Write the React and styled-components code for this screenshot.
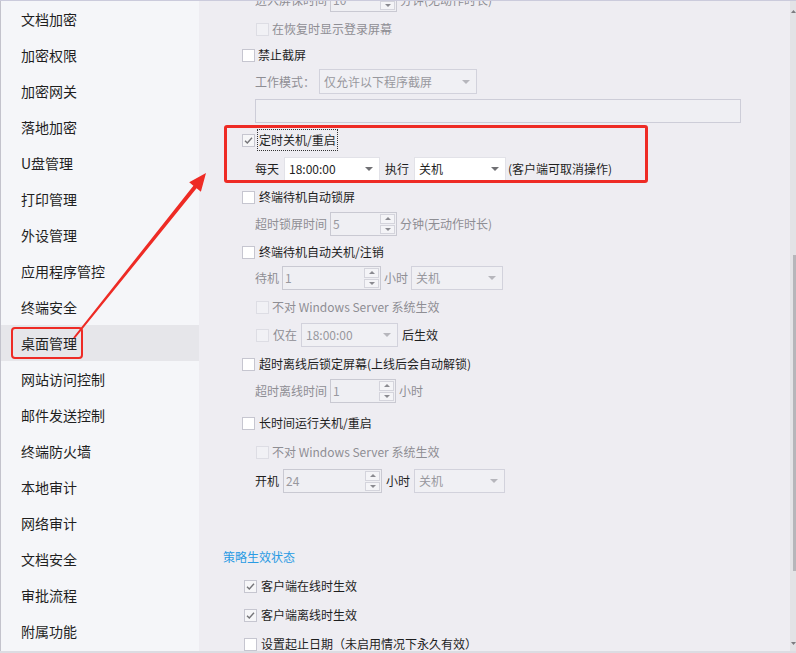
import React from "react";
import styled, { createGlobalStyle } from "styled-components";

const FONT = `"Noto Sans CJK SC", "Noto Sans", sans-serif`;

const Global = createGlobalStyle`
  html, body { margin: 0; padding: 0; background: #eeedf2; }
  body { font-family: ${FONT}; }
`;

const Frame = styled.div`
  position: relative;
  width: 796px;
  height: 653px;
  box-sizing: border-box;
  display: flex;
  overflow: hidden;
  border-top: 1px solid #cbcbdc;
  border-bottom: 2px solid #dcdce2;
  background: #eeedf2;
  font-family: ${FONT};
`;

const Sidebar = styled.nav`
  width: 199px;
  flex: none;
  box-sizing: border-box;
  border-left: 1px solid #c3c3cc;
  background: #f5f6f9;
  padding-top: 0;
  display: flex;
  flex-direction: column;
`;

const NavItem = styled.div`
  height: 36px;
  flex: none;
  display: flex;
  align-items: center;
  padding-left: 20px;
  font-size: 14px;
  line-height: 16px;
  color: #1f1f1f;
  background: ${(p) => (p.$active ? "#e6e6ea" : "transparent")};
`;

const Marked = styled.span`
  position: relative;
  &::after {
    content: "";
    position: absolute;
    left: -10px;
    right: -6px;
    top: -8px;
    bottom: -8px;
    border: 2.5px solid #ee2b25;
    border-radius: 4px;
    pointer-events: none;
  }
`;

const Splitter = styled.div`
  width: 12px;
  flex: none;
  display: flex;
  align-items: center;
`;

const Grip = styled.div`
  margin-left: 4px;
  width: 5px;
  height: 17px;
  background-image: radial-gradient(circle, #b4b4bc 0.5px, transparent 0.6px);
  background-size: 2px 2px;
`;

const Content = styled.main`
  flex: 1;
  display: flex;
  min-width: 0;
`;

const ScrollArea = styled.div`
  flex: 1;
  overflow: hidden;
  padding-left: 12px;
`;

const Column = styled.div`
  margin-top: -13px;
  display: flex;
  flex-direction: column;
`;

const Row = styled.div`
  display: flex;
  align-items: center;
  height: ${(p) => p.$h || 24}px;
  flex: none;
  margin-top: ${(p) => p.$mt || 0}px;
  padding-left: ${(p) => p.$indent || 0}px;
  gap: ${(p) => (p.$gap != null ? p.$gap : 4)}px;
  font-size: 12px;
  line-height: 16px;
  white-space: nowrap;
`;

const Text = styled.span`
  color: ${(p) => (p.$muted ? "#8e8e94" : "#1e1e1e")};
  ${(p) =>
    p.$focus
      ? `outline: 1px dotted #333; outline-offset: 1px; padding: 1px 0;`
      : ""}
`;

const Heading = styled.div`
  margin-top: ${(p) => p.$mt}px;
  height: 24px;
  display: flex;
  align-items: center;
  font-size: 12px;
  color: #2a9be3;
`;

const Box = styled.span`
  width: 13px;
  height: 13px;
  flex: none;
  box-sizing: border-box;
  display: flex;
  align-items: center;
  justify-content: center;
  border: 1px solid ${(p) => (p.$disabled ? "#dddde4" : "#c6c6d0")};
  background: ${(p) =>
    p.$disabled ? "#f1f1f5" : p.$checked ? "#f6f6f8" : "#ffffff"};
`;

const Check = ({ checked, disabled }) => (
  <Box $checked={checked} $disabled={disabled}>
    {checked && (
      <svg width="11" height="11" viewBox="0 0 11 11">
        <path d="M2 5.8 L4.3 8 L9 2.8" fill="none" stroke="#747478" strokeWidth="1.4" />
      </svg>
    )}
  </Box>
);

const SelectBox = styled.div`
  width: ${(p) => p.$w}px;
  height: ${(p) => p.$h || 24}px;
  box-sizing: border-box;
  flex: none;
  display: flex;
  align-items: center;
  justify-content: space-between;
  padding: 0 6px 0 4px;
  border: 1px solid ${(p) => (p.$disabled ? "#d2d2dc" : "#e2e2e8")};
  background: ${(p) => (p.$disabled ? "#f0f0f4" : "#ffffff")};
  color: ${(p) => (p.$disabled ? "#98989e" : "#1e1e1e")};
`;

const Select = ({ w, h, value, disabled }) => (
  <SelectBox $w={w} $h={h} $disabled={disabled}>
    <span>{value}</span>
    <svg width="8" height="4" viewBox="0 0 8 4">
      <polygon points="0,0 8,0 4,4" fill={disabled ? "#b6b6bc" : "#707074"} />
    </svg>
  </SelectBox>
);

const SpinBox = styled.div`
  width: ${(p) => p.$w}px;
  height: 24px;
  box-sizing: border-box;
  flex: none;
  display: flex;
  border: 1px solid #c9c9d2;
  background: #efeff3;
  color: #98989e;
`;

const SpinValue = styled.span`
  flex: 1;
  display: flex;
  align-items: center;
  padding-left: 2px;
`;

const SpinButtons = styled.div`
  width: 15px;
  display: flex;
  flex-direction: column;
  padding: 1px 1px 1px 0;
  gap: 1px;
`;

const SpinBtn = styled.div`
  flex: 1;
  display: flex;
  align-items: center;
  justify-content: center;
  border: 1px solid #d4d4dc;
  background: #f4f4f7;
`;

const Spin = ({ w, value }) => (
  <SpinBox $w={w}>
    <SpinValue>{value}</SpinValue>
    <SpinButtons>
      <SpinBtn>
        <svg width="6" height="3" viewBox="0 0 6 3">
          <polygon points="0,3 6,3 3,0" fill="#8a8a90" />
        </svg>
      </SpinBtn>
      <SpinBtn>
        <svg width="6" height="3" viewBox="0 0 6 3">
          <polygon points="0,0 6,0 3,3" fill="#8a8a90" />
        </svg>
      </SpinBtn>
    </SpinButtons>
  </SpinBox>
);

const TextArea = styled.div`
  width: 486px;
  height: 24px;
  box-sizing: border-box;
  border: 1px solid #cdcdd8;
  background: #efeff3;
`;

const Highlight = styled.div`
  position: relative;
  margin-top: ${(p) => p.$mt}px;
  display: flex;
  flex-direction: column;
  &::after {
    content: "";
    position: absolute;
    left: 1px;
    width: 424px;
    top: -3px;
    bottom: -2px;
    box-sizing: border-box;
    border: 3px solid #ee2b25;
    border-radius: 3px;
    pointer-events: none;
  }
`;

const Scrollbar = styled.div`
  width: 6px;
  flex: none;
  background: #e3e3e6;
  display: flex;
  flex-direction: column;
  align-items: flex-end;
  padding-top: 9px;
  box-sizing: border-box;
`;

const ScrollArrow = styled.svg`
  align-self: center;
  flex: none;
`;

const Thumb = styled.div`
  width: 3px;
  height: 316px;
  margin-top: 242px;
  background: #b6b6ba;
`;

const BottomArrow = styled(ScrollArrow)`
  margin-top: auto;
  margin-bottom: 6px;
`;

const Overlay = styled.svg`
  position: absolute;
  left: 0;
  top: 0;
  pointer-events: none;
`;

const navItems = [
  "文档加密", "加密权限", "加密网关", "落地加密", "U盘管理", "打印管理",
  "外设管理", "应用程序管控", "终端安全", "桌面管理", "网站访问控制",
  "邮件发送控制", "终端防火墙", "本地审计", "网络审计", "文档安全",
  "审批流程", "附属功能",
];

export default function App() {
  return (
    <>
      <Global />
      <Frame>
        <Sidebar>
          {navItems.map((n) => (
            <NavItem key={n} $active={n === "桌面管理"}>
              {n === "桌面管理" ? <Marked>{n}</Marked> : n}
            </NavItem>
          ))}
        </Sidebar>
        <Splitter>
          <Grip />
        </Splitter>
        <Content>
          <ScrollArea>
            <Column>
              <Row $indent={32} $gap={3}>
                <Text $muted>进入屏保时间</Text>
                <Spin w={67} value="10" />
                <Text $muted>分钟(无动作时长)</Text>
              </Row>
              <Row $mt={5} $indent={33} $gap={3}>
                <Check disabled />
                <Text $muted>在恢复时显示登录屏幕</Text>
              </Row>
              <Row $mt={2} $indent={19} $gap={3}>
                <Check />
                <Text>禁止截屏</Text>
              </Row>
              <Row $mt={2} $h={25} $indent={32} $gap={4}>
                <Text $muted>工作模式：</Text>
                <Select w={158} h={25} value="仅允许以下程序截屏" disabled />
              </Row>
              <Row $mt={5} $indent={32}>
                <TextArea />
              </Row>
              <Highlight $mt={5}>
                <Row $indent={19} $gap={4}>
                  <Check checked />
                  <Text $focus>定时关机/重启</Text>
                </Row>
                <Row $mt={5} $indent={32} $gap={5}>
                  <Text>每天</Text>
                  <Select w={96} value="18:00:00" />
                  <Text>执行</Text>
                  <Select w={92} value="关机" />
                  <Text style={{ marginLeft: -3 }}>(客户端可取消操作)</Text>
                </Row>
              </Highlight>
              <Row $mt={4} $indent={19} $gap={4}>
                <Check />
                <Text>终端待机自动锁屏</Text>
              </Row>
              <Row $mt={3} $indent={32} $gap={3}>
                <Text $muted>超时锁屏时间</Text>
                <Spin w={67} value="5" />
                <Text $muted>分钟(无动作时长)</Text>
              </Row>
              <Row $mt={4} $indent={19} $gap={4}>
                <Check />
                <Text>终端待机自动关机/注销</Text>
              </Row>
              <Row $mt={2} $indent={32} $gap={3}>
                <Text $muted>待机</Text>
                <Spin w={99} value="1" />
                <Text $muted>小时</Text>
                <Select w={92} value="关机" disabled />
              </Row>
              <Row $mt={5} $indent={33} $gap={3}>
                <Check disabled />
                <Text $muted>不对 Windows Server 系统生效</Text>
              </Row>
              <Row $mt={4} $indent={33} $gap={4}>
                <Check disabled />
                <Text $muted>仅在</Text>
                <Select w={97} value="18:00:00" disabled />
                <Text>后生效</Text>
              </Row>
              <Row $mt={5} $indent={19} $gap={4}>
                <Check />
                <Text>超时离线后锁定屏幕(上线后会自动解锁)</Text>
              </Row>
              <Row $mt={3} $indent={32} $gap={3}>
                <Text $muted>超时离线时间</Text>
                <Spin w={66} value="1" />
                <Text $muted>小时</Text>
              </Row>
              <Row $mt={8} $indent={19} $gap={4}>
                <Check />
                <Text>长时间运行关机/重启</Text>
              </Row>
              <Row $mt={5} $indent={33} $gap={3}>
                <Check disabled />
                <Text $muted>不对 Windows Server 系统生效</Text>
              </Row>
              <Row $mt={5} $indent={32} $gap={4}>
                <Text>开机</Text>
                <Spin w={99} value="24" />
                <Text>小时</Text>
                <Select w={91} value="关机" disabled />
              </Row>
              <Heading $mt={51}>策略生效状态</Heading>
              <Row $mt={6} $indent={21} $gap={4}>
                <Check checked />
                <Text>客户端在线时生效</Text>
              </Row>
              <Row $mt={5} $indent={21} $gap={4}>
                <Check checked />
                <Text>客户端离线时生效</Text>
              </Row>
              <Row $mt={5} $indent={21} $gap={4}>
                <Check />
                <Text>设置起止日期（未启用情况下永久有效）</Text>
              </Row>
            </Column>
          </ScrollArea>
          <Scrollbar>
            <ScrollArrow width="5" height="3" viewBox="0 0 5 3">
              <polygon points="0,3 5,3 2.5,0" fill="#7c7c80" />
            </ScrollArrow>
            <Thumb />
            <BottomArrow width="5" height="3" viewBox="0 0 5 3">
              <polygon points="0,0 5,0 2.5,3" fill="#7c7c80" />
            </BottomArrow>
          </Scrollbar>
        </Content>
        <Overlay width="796" height="653" viewBox="0 0 796 653">
          <polygon
            points="73.2,336.4 193.4,184.8 189.2,181.3 206,172 200.9,190.7 196.6,187.2 74.8,337.6"
            fill="#ee2b25"
          />
        </Overlay>
      </Frame>
    </>
  );
}
